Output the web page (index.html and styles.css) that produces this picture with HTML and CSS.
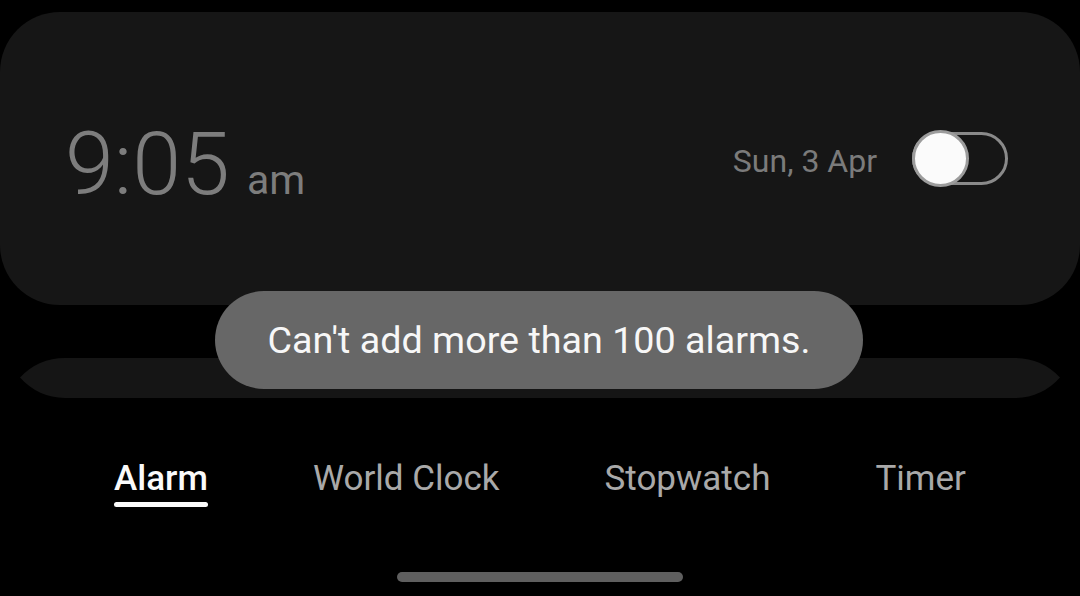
FILE: index.html
```html
<!DOCTYPE html>
<html lang="en">
<head>
<meta charset="utf-8">
<title>Alarm</title>
<link rel="stylesheet" href="styles.css">
</head>
<body>
<div class="screen">
  <section class="card">
    <div class="time"><span class="digits">9:05</span><span class="ampm">am</span></div>
    <div class="right">
      <span class="date">Sun, 3 Apr</span>
      <span class="toggle"><span class="thumb"></span></span>
    </div>
  </section>
  <svg class="peek" width="1080" height="40" viewBox="0 0 1080 40" aria-hidden="true">
    <path d="M65 0 H1015 A62 62 0 0 1 1060 19.5 A62 62 0 0 1 1015 40 H65 A62 62 0 0 1 20 19.5 A62 62 0 0 1 65 0 Z" fill="#151515"/>
  </svg>
  <nav class="tabs">
    <span class="tab active">Alarm<span class="underline"></span></span>
    <span class="tab">World Clock</span>
    <span class="tab">Stopwatch</span>
    <span class="tab">Timer</span>
  </nav>
  <div class="home-bar"></div>
  <div class="toast">Can't add more than 100 alarms.</div>
</div>
</body>
</html>
```
FILE: styles.css
```css
html, body {
  margin: 0;
  padding: 0;
  background: #000;
}
body {
  font-family: Roboto, "Noto Sans", "Liberation Sans", sans-serif;
  width: 1080px;
  height: 596px;
  overflow: hidden;
}
.screen {
  position: relative;
  width: 1080px;
  height: 596px;
  padding-top: 12px;
  box-sizing: border-box;
}
.card {
  height: 293px;
  background: #161616;
  border-radius: 60px;
  display: flex;
  align-items: center;
  justify-content: space-between;
  padding: 0 72px 0 65px;
  box-sizing: border-box;
}
.time {
  padding-top: 10px;
  color: #7d7d7d;
  line-height: 1;
  white-space: nowrap;
}
.digits {
  font-size: 88px;
  font-weight: 300;
}
.ampm {
  font-size: 41px;
  margin-left: 17px;
}
.right {
  display: flex;
  align-items: center;
  gap: 35px;
}
.date {
  font-size: 32px;
  line-height: 1;
  padding-top: 5px;
  color: #7b7b7b;
}
.toggle {
  position: relative;
  display: block;
  width: 96px;
  height: 53px;
  border: 3px solid #8a8a8a;
  border-radius: 27px;
  box-sizing: border-box;
}
.thumb {
  position: absolute;
  left: -3px;
  top: -5px;
  width: 57px;
  height: 57px;
  border-radius: 50%;
  background: #fbfbfb;
  border: 3px solid #9c9c9c;
  box-sizing: border-box;
}
.peek {
  display: block;
  margin-top: 53px;
}
.tabs {
  margin-top: 63px;
  display: flex;
  justify-content: center;
  gap: 105px;
  font-size: 35px;
  line-height: 1;
}
.tab {
  display: inline-flex;
  flex-direction: column;
  color: #a9a9a9;
  white-space: nowrap;
}
.tab.active {
  color: #fafafa;
  font-weight: 500;
}
.underline {
  display: block;
  height: 5px;
  margin-top: 6px;
  border-radius: 3px;
  background: #fafafa;
}
.home-bar {
  width: 286px;
  height: 10px;
  border-radius: 5px;
  background: #5f5f5f;
  margin: 65px auto 0;
}
.toast {
  position: absolute;
  left: 215px;
  top: 291px;
  width: 648px;
  height: 98px;
  border-radius: 49px;
  background: #676767;
  color: #f7f7f7;
  font-size: 37.7px;
  display: flex;
  align-items: center;
  justify-content: center;
}
```
